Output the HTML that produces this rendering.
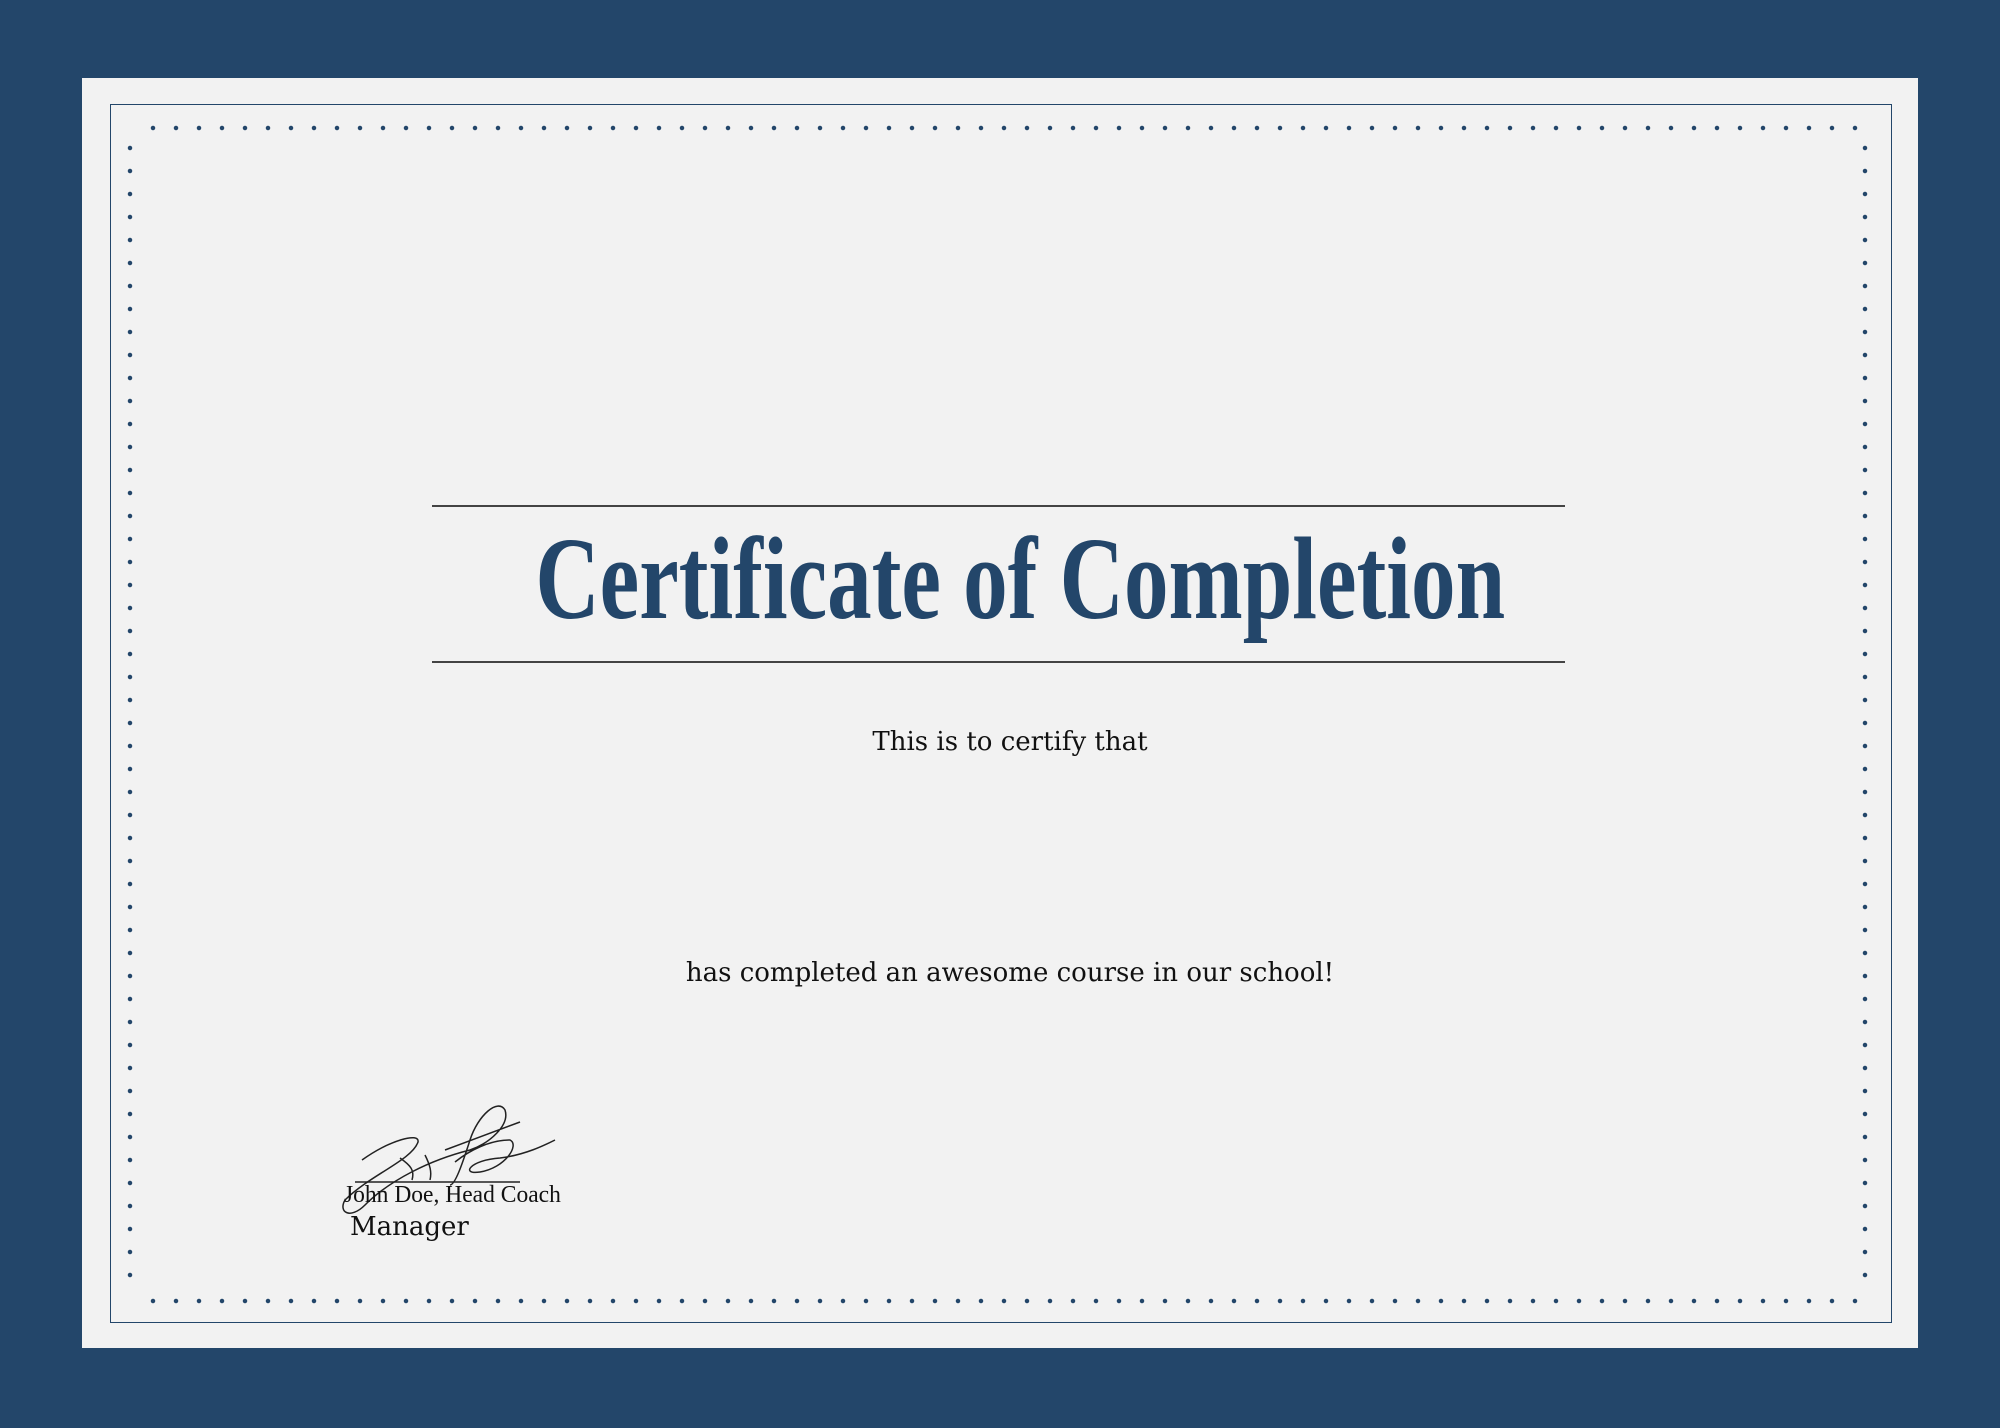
<!DOCTYPE html>
<html><head><style>
html,body{margin:0;padding:0}
body{width:2000px;height:1428px;background:#23466a;position:relative;overflow:hidden;font-family:"Liberation Serif",serif}
.paper{position:absolute;left:82px;top:78px;width:1836px;height:1270px;background:#f2f2f2}
.inner{position:absolute;left:110px;top:104px;width:1782px;height:1219px;border:1.5px solid #23466a;box-sizing:border-box}
.hl{position:absolute;left:432px;width:1133px;height:1.5px;background:#444}
.title{position:absolute;left:0;width:2000px;top:514px;text-align:center;color:#23466a;font-weight:bold;font-size:118px;line-height:130px}
.title span{display:inline-block;transform:scaleX(0.755);transform-origin:center;white-space:nowrap;position:relative;left:20px}
.t{position:absolute;left:10px;width:2000px;text-align:center;color:#111;font-size:26px;font-family:"DejaVu Serif",serif}
</style></head><body>
<div class="paper"></div>
<div class="inner"></div>
<svg width="2000" height="1428" style="position:absolute;left:0;top:0">
<g stroke="#23466a" stroke-width="4.5" stroke-linecap="round" stroke-dasharray="0 23" fill="none">
<line x1="153" y1="128" x2="1870" y2="128"/>
<line x1="153" y1="1301" x2="1870" y2="1301"/>
<line x1="130" y1="148" x2="130" y2="1290"/>
<line x1="1865" y1="148" x2="1865" y2="1290"/>
</g>
<g stroke="#222" stroke-width="1.5" fill="none">
<line x1="355" y1="1182" x2="520" y2="1182"/>
<path d="M362 1160 C 390 1140, 420 1132, 418 1142 C 412 1160, 370 1175, 345 1200 C 338 1212, 350 1220, 365 1205 C 390 1180, 430 1160, 470 1150 C 490 1143, 510 1125, 505 1110 C 498 1098, 478 1115, 470 1140 C 462 1165, 455 1185, 450 1185 M455 1162 C 470 1150, 490 1140, 510 1140 C 520 1145, 505 1168, 480 1172 C 460 1175, 470 1160, 500 1158 C 525 1155, 545 1145, 555 1140 M400 1158 C 410 1165, 415 1170, 412 1180 M425 1155 C 430 1165, 432 1172, 430 1180 M445 1150 L 520 1122"/>
</g>
</svg>
<div class="hl" style="top:505px"></div>
<div class="hl" style="top:661px"></div>
<div class="title"><span>Certificate of Completion</span></div>
<div class="t" style="top:727px">This is to certify that</div>
<div class="t" style="top:958px">has completed an awesome course in our school!</div>
<div style="position:absolute;left:344px;top:1182px;font-size:24px;color:#111;transform:scaleX(0.98);transform-origin:left">John Doe, Head Coach</div>
<div style="position:absolute;left:350px;top:1212px;font-size:26px;color:#111;font-family:'DejaVu Serif',serif">Manager</div>
</body></html>
